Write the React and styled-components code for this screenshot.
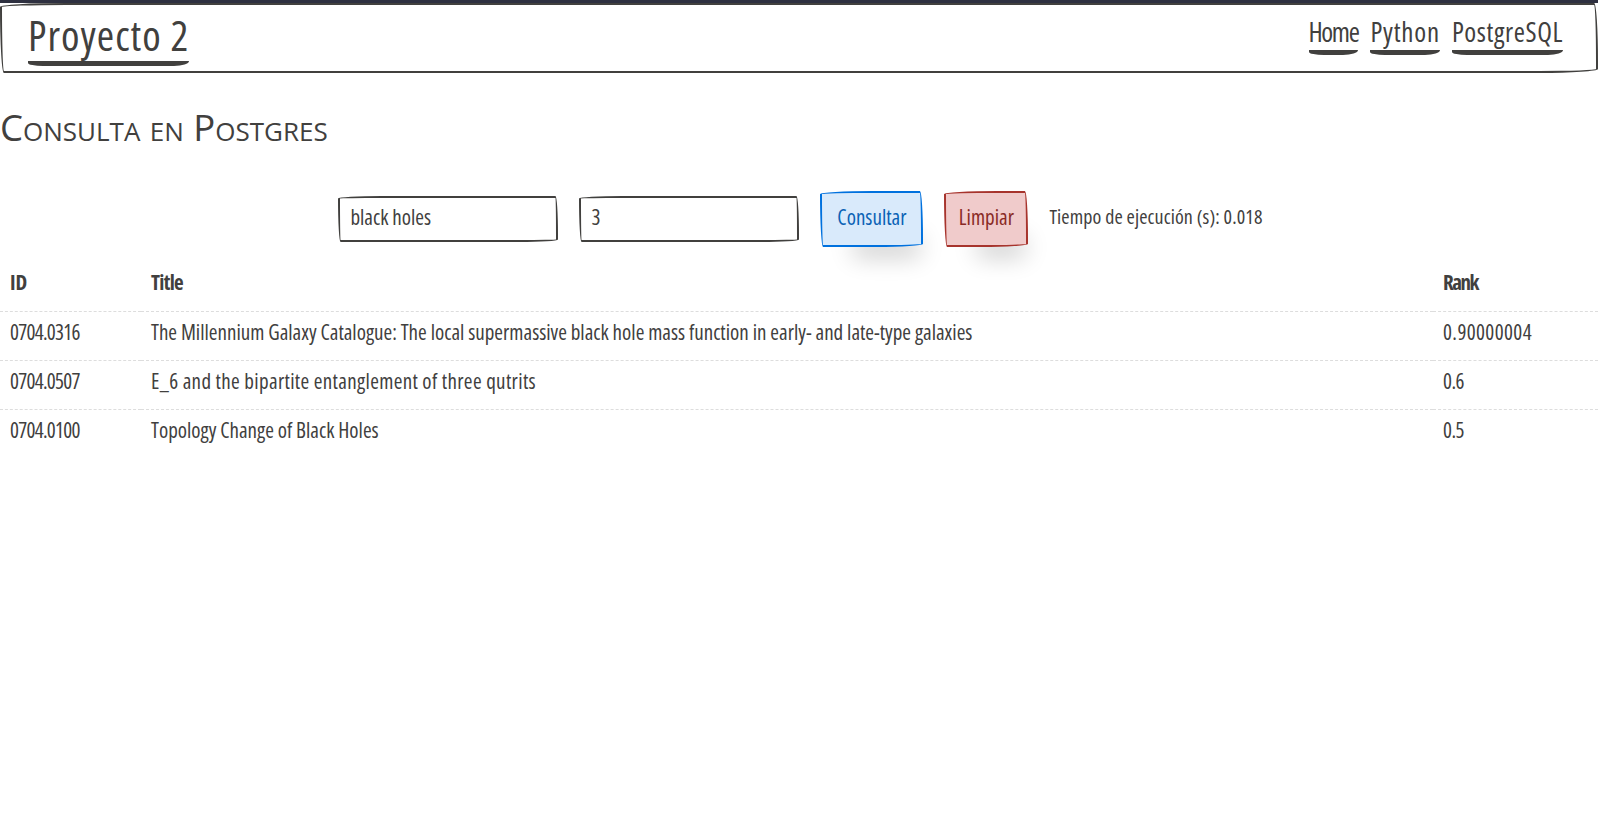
import React from 'react';
import styled, { createGlobalStyle } from 'styled-components';

const ink = '#41403e';
const sketchy = '255px 15px 225px 15px / 15px 225px 15px 255px';
const handFont = '"Open Sans", "Noto Sans", sans-serif';

const GlobalStyle = createGlobalStyle`
  html, body {
    margin: 0;
    background: #fff;
    color: ${ink};
    font-family: ${handFont};
    font-stretch: 75%;
  }
`;

const TopBar = styled.div`
  height: 3px;
  background: #2e3040;
`;

const Navbar = styled.nav`
  box-sizing: border-box;
  height: 70px;
  padding: 0 33px 0 26px;
  display: flex;
  justify-content: space-between;
  background: #fff;
  border: 2px solid ${ink};
  border-radius: ${sketchy};
`;

const Brand = styled.a`
  align-self: flex-start;
  margin-top: 3px;
  color: ${ink};
  text-decoration: none;
  font-size: 42px;
  line-height: 53px;
  letter-spacing: 1px;
  border-bottom: 5px solid ${ink};
  border-bottom-left-radius: 15px 3px;
  border-bottom-right-radius: 15px 5px;
`;

const NavLinks = styled.div`
  margin-top: 9px;
  align-self: flex-start;
  display: flex;
  gap: 12px;
`;

const NavLink = styled.a`
  color: ${ink};
  text-decoration: none;
  font-size: 27px;
  line-height: 36px;
  letter-spacing: ${p => p.$spacing}px;
  border-bottom: 5px solid ${ink};
  border-bottom-left-radius: 15px 3px;
  border-bottom-right-radius: 15px 5px;
`;

const Heading = styled.h3`
  margin: 32px 0 0;
  font-size: 36.5px;
  line-height: 44px;
  font-weight: 500;
  font-stretch: 88%;
  font-variant: small-caps;
`;

const QueryForm = styled.form`
  margin-top: 42px;
  padding-left: 3px;
  display: flex;
  justify-content: center;
  align-items: center;
  gap: 21px;
`;

const Field = styled.input`
  box-sizing: border-box;
  width: 220px;
  height: 46px;
  padding: 0 10px 4px;
  font: 21px ${handFont};
  font-stretch: 75%;
  color: ${ink};
  background: #fff;
  border: 2px solid ${ink};
  border-radius: ${sketchy};
  outline: none;
`;

const Button = styled.button`
  box-sizing: border-box;
  width: ${p => p.$width}px;
  height: 56px;
  padding: 0 0 4px;
  font: 21px ${handFont};
  font-stretch: 75%;
  color: ${p => p.$fg};
  background: ${p => p.$bg};
  border: 2px solid ${p => p.$border};
  border-radius: ${sketchy};
  box-shadow: 15px 28px 25px -18px rgba(0, 0, 0, .2);
`;

const Timing = styled.span`
  font-size: 20px;
  letter-spacing: .1px;
  padding-bottom: 6px;
`;

const Table = styled.table`
  width: 100%;
  table-layout: fixed;
  margin-top: 11px;
  border-collapse: collapse;
  font-size: 21px;
  line-height: 32px;
`;

const HeadCell = styled.th`
  padding: 8px 10px 13px;
  text-align: left;
  font-weight: 700;
  letter-spacing: ${p => p.$spacing || 0}px;
  border-bottom: 1px dashed #ddd;
  width: ${p => p.$width || 'auto'};
`;

const Cell = styled.td`
  padding: 4px 10px 12px;
  letter-spacing: ${p => p.$spacing || 0}px;
  border-bottom: 1px dashed #ddd;
  tr:last-child > & {
    border-bottom: none;
  }
`;

const rows = [
  { id: '0704.0316', title: 'The Millennium Galaxy Catalogue: The local supermassive black hole mass function in early- and late-type galaxies', rank: '0.90000004', spacing: 0, rankSpacing: 0.4 },
  { id: '0704.0507', title: 'E_6 and the bipartite entanglement of three qutrits', rank: '0.6', spacing: 0.34, rankSpacing: -0.5 },
  { id: '0704.0100', title: 'Topology Change of Black Holes', rank: '0.5', spacing: 0, rankSpacing: -0.5 },
];

export default function App() {
  return (
    <>
      <GlobalStyle />
      <TopBar />
      <Navbar>
        <Brand href="#">Proyecto 2</Brand>
        <NavLinks>
          <NavLink href="#" $spacing={-1.4}>Home</NavLink>
          <NavLink href="#" $spacing={0.8}>Python</NavLink>
          <NavLink href="#" $spacing={0.6}>PostgreSQL</NavLink>
        </NavLinks>
      </Navbar>
      <Heading>Consulta en Postgres</Heading>
      <QueryForm onSubmit={e => e.preventDefault()}>
        <Field defaultValue="black holes" />
        <Field defaultValue="3" />
        <Button $width={103} $fg="#0a62b5" $bg="#d9eafb" $border="#0071de">Consultar</Button>
        <Button $width={84} $fg="#8a2a25" $bg="#f0cbcb" $border="#a7342d">Limpiar</Button>
        <Timing>Tiempo de ejecución (s): 0.018</Timing>
      </QueryForm>
      <Table>
        <thead>
          <tr>
            <HeadCell $width="121px">ID</HeadCell>
            <HeadCell $spacing={-0.7}>Title</HeadCell>
            <HeadCell $width="145px" $spacing={-1.5}>Rank</HeadCell>
          </tr>
        </thead>
        <tbody>
          {rows.map(r => (
            <tr key={r.id}>
              <Cell $spacing={-0.7}>{r.id}</Cell>
              <Cell $spacing={r.spacing}>{r.title}</Cell>
              <Cell $spacing={r.rankSpacing}>{r.rank}</Cell>
            </tr>
          ))}
        </tbody>
      </Table>
    </>
  );
}
